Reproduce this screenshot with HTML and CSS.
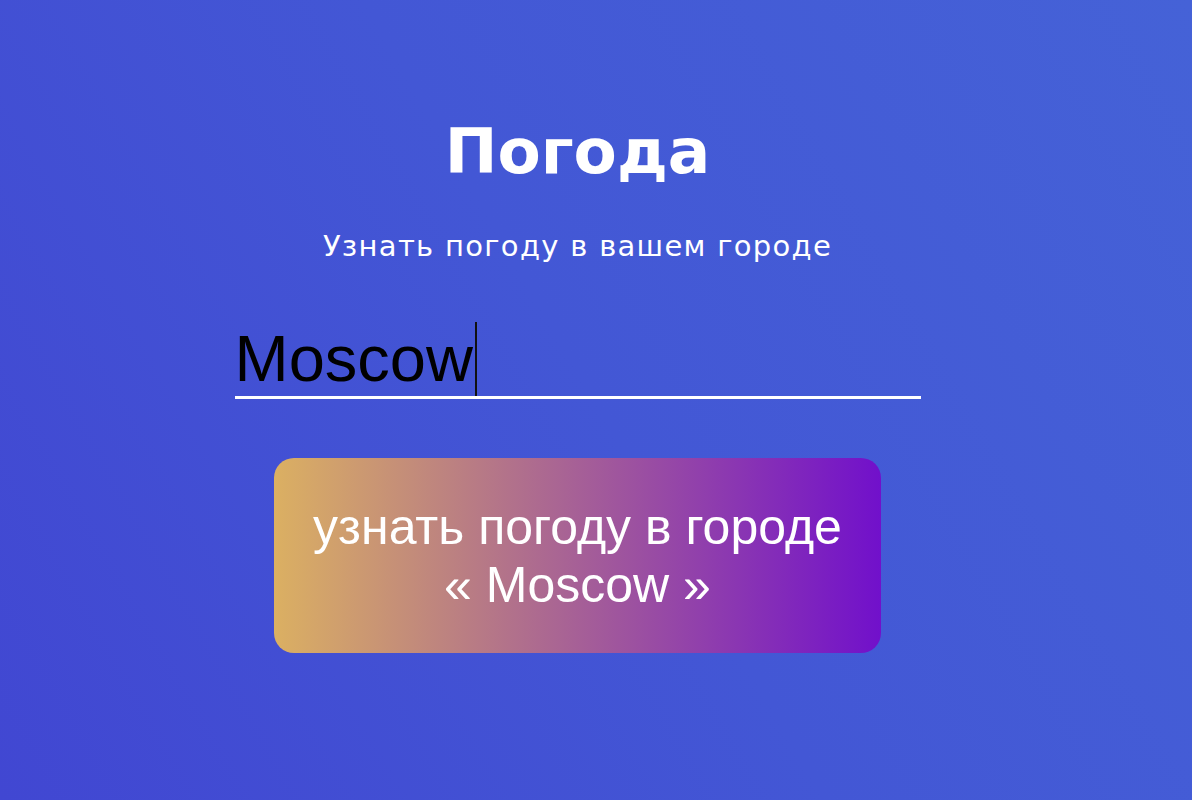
FILE: index.html
```html
<!DOCTYPE html>
<html lang="ru">
<head>
<meta charset="utf-8">
<title>Погода</title>
<link rel="stylesheet" href="styles.css">
</head>
<body>
<main class="app">
  <h1 class="title">Погода</h1>
  <p class="subtitle">Узнать погоду в вашем городе</p>
  <div class="field"><span class="field-value">Moscow</span><span class="caret"></span></div>
  <button class="submit" type="button">узнать погоду в городе<br>« Moscow »</button>
</main>
</body>
</html>
```

FILE: styles.css
```css
html, body {
  margin: 0;
  padding: 0;
}
body {
  min-height: 100vh;
  background: linear-gradient(60deg, #4147d2 0%, #4357d5 50%, #4562d7 100%);
  font-family: "Liberation Sans", Arial, sans-serif;
}
.app {
  width: 1155px;
  display: flex;
  flex-direction: column;
  align-items: center;
  padding-top: 120px;
}
.title {
  margin: 0;
  font-family: "DejaVu Sans", Verdana, sans-serif;
  font-weight: bold;
  font-size: 63px;
  line-height: 63px;
  color: #fff;
}
.subtitle {
  margin: 49px 0 0;
  font-family: "DejaVu Sans", Verdana, sans-serif;
  font-size: 29px;
  line-height: 29px;
  letter-spacing: 1.3px;
  color: #fff;
}
.field {
  margin-top: 61px;
  width: 686px;
  height: 74px;
  border-bottom: 3px solid #fff;
  font-size: 65px;
  line-height: 74px;
  color: #000;
  display: flex;
  align-items: stretch;
}
.caret {
  width: 2px;
  margin-left: 2px;
  background: #111;
}
.submit {
  margin-top: 59px;
  width: 607px;
  height: 195px;
  border: none;
  border-radius: 20px;
  background: linear-gradient(to right, #dbb062 0%, #7110cb 100%);
  color: #fff;
  font-family: "Liberation Sans", Arial, sans-serif;
  font-size: 50px;
  line-height: 58px;
  padding: 0 20px;
  text-align: center;
  cursor: pointer;
}
```
